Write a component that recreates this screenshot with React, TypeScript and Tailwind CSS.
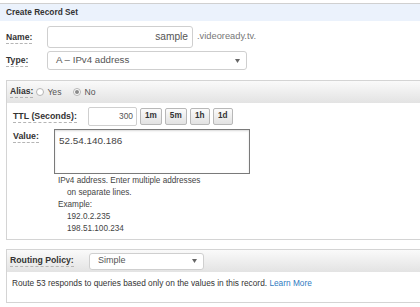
import React from "react";

const Caret = () => (
  <svg width="5" height="4" viewBox="0 0 5 4" className="block">
    <path d="M0 0 L5 0 L2.5 4 Z" fill="#666" />
  </svg>
);

const Label = ({ children }: { children: React.ReactNode }) => (
  <span className="font-bold text-[#333] border-b border-dashed border-[#b5b5b5] pb-[1px] leading-[10px]">
    {children}
  </span>
);

const Radio = ({ checked }: { checked?: boolean }) => (
  <span className="inline-flex items-center justify-center w-[8px] h-[8px] rounded-full border border-[#b5b5b5] bg-white">
    {checked ? <span className="w-[4px] h-[4px] rounded-full bg-[#8a8a8a]" /> : null}
  </span>
);

const TtlButton = ({ text }: { text: string }) => (
  <button className="h-[17px] px-[4px] min-w-[20px] rounded-[2px] border border-[#b8b8b8] bg-gradient-to-b from-[#fbfbfb] to-[#e2e2e2] text-[8.2px] font-bold text-[#333] leading-none">
    {text}
  </button>
);

export default function App() {
  return (
    <div className="w-[420px] h-[307px] overflow-hidden bg-white text-[#333] font-['Liberation_Sans',Arial,sans-serif]">
      {/* ===== header ===== */}
      <div className="mt-[3px] h-[18px] border-t border-[#d0d0d0] bg-[#ebf2fc] pl-[6px] flex items-center text-[8.3px] font-bold">
        Create Record Set
      </div>

      {/* ===== name / type ===== */}
      <div className="mt-[5px] flex items-center h-[22px]">
        <div className="w-[47px] pl-[6px] text-[8.6px]">
          <Label>Name:</Label>
        </div>
        <div className="w-[146px] h-[22px] border border-[#cfcfcf] rounded-[3px] flex items-center justify-end pr-[4px] text-[10.2px] text-[#555]">
          sample
        </div>
        <span className="ml-[4px] text-[9.3px] text-[#777]">.videoready.tv.</span>
      </div>
      <div className="mt-[3px] flex items-center h-[19px]">
        <div className="w-[47px] pl-[6px] text-[8.6px]">
          <Label>Type:</Label>
        </div>
        <div className="w-[200px] h-[19px] border border-[#cfcfcf] rounded-[3px] flex items-center justify-between pl-[8px] pr-[6px] text-[9.7px] text-[#555]">
          <span>A – IPv4 address</span>
          <Caret />
        </div>
      </div>

      {/* ===== alias / ttl / value ===== */}
      <div className="mt-[10px] ml-[6px] w-[430px] border border-[#d4d4d4]">
        <div className="h-[22px] bg-gradient-to-b from-[#fafafa] to-[#e3e3e3] flex items-center pl-[3px] text-[8.6px]">
          <Label>Alias:</Label>
          <span className="ml-[3px] flex items-center gap-[3px] text-[#555]">
            <Radio /> Yes
          </span>
          <span className="ml-[12px] flex items-center gap-[3px] text-[#555]">
            <Radio checked /> No
          </span>
        </div>
        <div className="pl-[6px] pt-[4px] pb-[4px]">
          <div className="flex items-center h-[19px]">
            <div className="w-[75px] text-[8.8px]">
              <Label>TTL (Seconds):</Label>
            </div>
            <div className="w-[49px] h-[19px] border border-[#cfcfcf] rounded-[2px] flex items-center justify-end pr-[3px] text-[8.4px] text-[#555]">
              300
            </div>
            <div className="ml-[3px] flex gap-[3px]">
              <TtlButton text="1m" />
              <TtlButton text="5m" />
              <TtlButton text="1h" />
              <TtlButton text="1d" />
            </div>
          </div>
          <div className="mt-[3px] flex">
            <div className="w-[41px] pt-[1px] text-[8.8px]">
              <Label>Value:</Label>
            </div>
            <div>
              <div className="w-[196px] h-[45px] border border-[#7a7a7a] shadow-[inset_0_1px_2px_rgba(0,0,0,0.15)] px-[4px] pt-[5px] text-[9.9px] text-[#444] leading-[11px]">
                52.54.140.186
              </div>
              <div className="pl-[4px] pt-[1px] text-[8.2px] leading-[12px] text-[#444]">
                <div>IPv4 address. Enter multiple addresses</div>
                <div className="pl-[9px]">on separate lines.</div>
                <div>Example:</div>
                <div className="pl-[9px]">192.0.2.235</div>
                <div className="pl-[9px]">198.51.100.234</div>
              </div>
            </div>
          </div>
        </div>
      </div>

      {/* ===== routing ===== */}
      <div className="mt-[9px] ml-[6px] w-[430px] border border-[#d4d4d4]">
        <div className="h-[22px] bg-gradient-to-b from-[#fafafa] to-[#e3e3e3] flex items-center pl-[3px] text-[8.7px]">
          <div className="w-[79px]">
            <Label>Routing Policy:</Label>
          </div>
          <div className="w-[115px] h-[17px] bg-white border border-[#cfcfcf] rounded-[3px] flex items-center justify-between pl-[8px] pr-[6px] text-[9px] text-[#555]">
            <span>Simple</span>
            <Caret />
          </div>
        </div>
        <div className="h-[30px] pl-[5px] pt-[6px] text-[8.3px] leading-[10px] text-[#333]">
          Route 53 responds to queries based only on the values in this record.{" "}
          <a className="text-[#2f7bbf]">Learn More</a>
        </div>
      </div>
    </div>
  );
}
